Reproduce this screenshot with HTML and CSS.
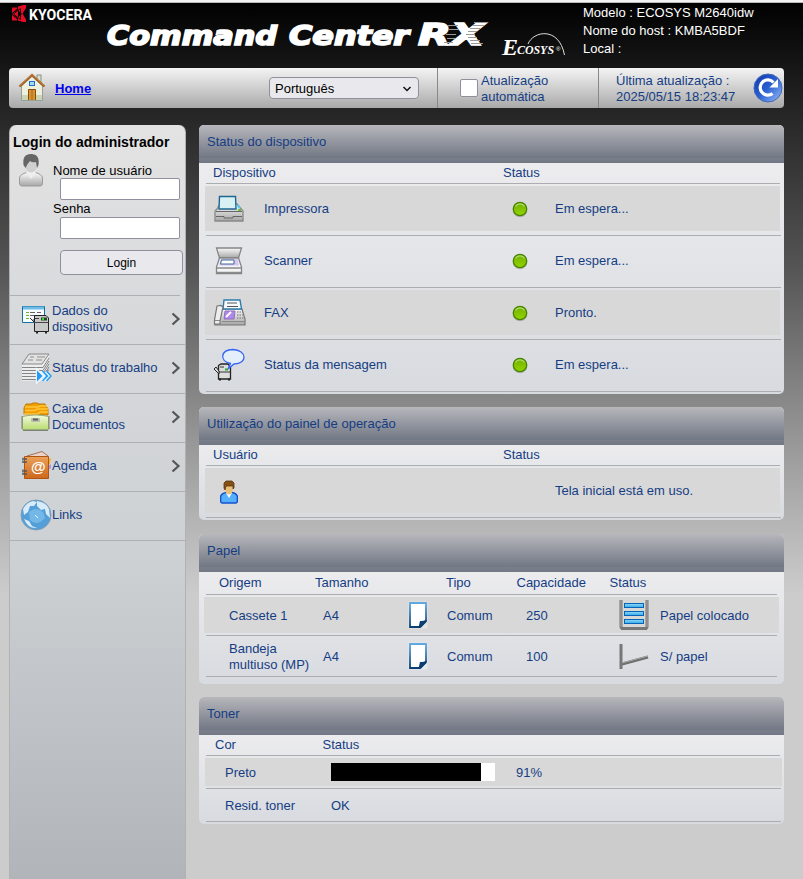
FILE: index.html
```html
<!DOCTYPE html>
<html lang="pt">
<head>
<meta charset="utf-8">
<title>Command Center RX</title>
<link rel="stylesheet" href="styles.css">
</head>
<body>
<svg class="defs" width="0" height="0" aria-hidden="true">
  <defs>
    <linearGradient id="metal" x1="0" y1="0" x2="0" y2="1"><stop offset="0" stop-color="#fafafa"/><stop offset="1" stop-color="#a6a6a6"/></linearGradient>
    <linearGradient id="blue" x1="0" y1="0" x2="1" y2="1"><stop offset="0" stop-color="#0a35ad"/><stop offset=".5" stop-color="#2c61d2"/><stop offset="1" stop-color="#9bc2fa"/></linearGradient>
    <linearGradient id="sheet" x1="0" y1="0" x2="0" y2="1"><stop offset="0" stop-color="#5fa8e0"/><stop offset="1" stop-color="#0b3f72"/></linearGradient>
    <linearGradient id="green" x1="0" y1="0" x2="0" y2="1"><stop offset="0" stop-color="#72b000"/><stop offset="1" stop-color="#94d400"/></linearGradient>
    <linearGradient id="orange" x1="0" y1="0" x2="0" y2="1"><stop offset="0" stop-color="#eba159"/><stop offset="1" stop-color="#cd681b"/></linearGradient>
    <linearGradient id="box" x1="0" y1="0" x2="0" y2="1"><stop offset="0" stop-color="#f2fbdd"/><stop offset="1" stop-color="#b9dc70"/></linearGradient>
    <linearGradient id="ink" x1="0" y1="0" x2="0" y2="1"><stop offset="0" stop-color="#8edcfb"/><stop offset="1" stop-color="#35a9e9"/></linearGradient>
    <symbol id="dot" viewBox="0 0 18 18"><circle cx="9" cy="9.8" r="7.4" fill="#777" opacity=".45"/><circle cx="9" cy="9" r="6.7" fill="url(#green)" stroke="#458500" stroke-width="1.2"/><path d="M4.4 6.4A5.4 5.4 0 0 1 13.6 6.4" fill="none" stroke="#b4da70" stroke-width="1.1"/></symbol>
    <symbol id="paper" viewBox="0 0 20 28"><rect x=".5" y=".5" width="19" height="27" rx="1" fill="#fff" opacity=".35"/><path d="M2 2H18V20L12 26H2Z" fill="#fff" stroke="url(#sheet)" stroke-width="1.8"/><path d="M18.500 18.500V21L13 26.500H10.500L12 20Q15 20.500 18.500 18.500Z" fill="#0b3f72"/></symbol>
  </defs>
</svg>

<header class="banner">
  <svg class="brand" width="580" height="64" viewBox="0 3 580 64">
    <g fill="#e60a24"><path d="M12 7.500H17V9L12 13ZM12 15 17 19V20.500H12ZM18 6.500 23.500 5H26V8L22.500 13.500 26 19.500V22H23L18 20.500V17.500L22 14 18 10Z"/><path d="M12 14 18 10V18Z"/></g>
    <path d="M13.500 14 20.500 8.500V19.500Z" fill="none" stroke="#170306"/>
    <text class="kyocera" x="29" y="19.500" textLength="63" lengthAdjust="spacingAndGlyphs">KYOCERA</text>
    <text class="wordmark" x="107" y="44.500" textLength="170" lengthAdjust="spacingAndGlyphs">Command</text>
    <text class="wordmark" x="289" y="44.500" textLength="120" lengthAdjust="spacingAndGlyphs">Center</text>
    <text class="wordmark rx" x="418" y="44.500" textLength="66" lengthAdjust="spacingAndGlyphs">RX</text>
    <path d="M447 25.500H458M448 29.500H459M446 34.500H456M447 38.500H455M444 42.500H453M474 22.500H488M472 25.500H484M470 28.500H480M468 31.500H477M466 34.500H475M468 37.500H477M470 40.500H480M471 43.500H483" stroke="#999"/>
    <text class="ecosys" x="502" y="55"><tspan class="cap">E</tspan></text>
    <text class="ecosys" x="517" y="53.500" textLength="37" lengthAdjust="spacingAndGlyphs">COSYS</text>
    <text class="reg" x="556" y="50.500">®</text>
    <path d="M528 44C533 31 559 26 564.500 55" fill="none" stroke="#ddd"/>
  </svg>
  <div class="device">Modelo : ECOSYS M2640idw<br>Nome do host : KMBA5BDF<br>Local :</div>
</header>

<nav class="toolbar">
  <div class="crumb">
    <svg width="30" height="32" viewBox="0 0 30 32">
      <rect x="20" y="3" width="4" height="9" fill="#d8e0cb" stroke="#8c9289"/>
      <path d="M4.500 14 15 4.500 25.500 14V28.500H4.500Z" fill="#edf0dc" stroke="#96a09a"/>
      <path d="M5 23H11V28H5ZM19 23H25V28H19Z" fill="#cdd4b4"/>
      <path d="M2.500 14.500 15 3 27.500 14.500" fill="none" stroke="#a2591a" stroke-width="2.200"/>
      <path d="M3 13.500 15 2.500 27 13.500" fill="none" stroke="#d59a55" stroke-width=".7"/>
      <rect x="12.500" y="9.500" width="5" height="4" fill="#9edcfb" stroke="#246fc9"/>
      <path d="M11.500 28V17.500H18.500V28" fill="#d3962f" stroke="#8d4b14"/><path d="M15 18V28" stroke="#a96b1e"/>
    </svg>
    <a class="home" href="#">Home</a>
    <div class="select"><span>Português</span><svg width="10" height="6" viewBox="0 0 10 6"><path d="M1.500 1 5 4.500 8.500 1" fill="none" stroke="#111" stroke-width="1.500"/></svg></div>
  </div>
  <label class="auto"><span class="check"></span><span>Atualização<br>automática</span></label>
  <div class="updated"><span>Última atualização :<br>2025/05/15 18:23:47</span>
    <svg width="30" height="30" viewBox="0 0 30 30"><circle cx="15" cy="15" r="14" fill="url(#blue)" stroke="#4268b5"/><path d="M19.500 20.500A7.600 7.600 0 1 1 20.500 9.500" fill="none" stroke="#fff" stroke-width="3.200"/><path d="M25 6V14.500H16.500Z" fill="#fff"/></svg>
  </div>
</nav>

<main class="layout">
  <aside class="sidebar">
    <section class="login">
      <h2>Login do administrador</h2>
      <div class="form">
        <svg width="26" height="34" viewBox="0 0 26 34">
          <path d="M1.500 31V25Q2 21 9 19.500H17Q24 21 24.500 25V31Q24 33 22 33H4Q2 33 1.500 31Z" fill="url(#metal)" stroke="#9b9b9b"/>
          <path d="M8 20 13 26 18 20 16 17H10Z" fill="#eee"/>
          <ellipse cx="13" cy="12" rx="6" ry="7.500" fill="#d0d0d0"/>
          <path d="M5.500 12Q4 1 13 1 22 1 20.500 12L19 15 18 9Q14 10 12 8 9 11 7.500 15Z" fill="#666"/>
        </svg>
        <div class="fields"><span>Nome de usuário</span><i class="input"></i><span class="second">Senha</span><i class="input"></i><button>Login</button></div>
      </div>
    </section>
    <hr>
    <a class="item"><svg width="32" height="32" viewBox="0 0 32 32"><path d="M2.500 3.500H24.500V19.500H2.500Z" fill="#f8fdff" stroke="#126f9e"/><path d="M3 5H24" stroke="#70bce8" stroke-width="3"/><path d="M6 9.500H9M6 12.500H9M6 15.500H9" stroke="#71b52d"/><path d="M10 9.500H15M10 12.500H18M17 9.500H21" stroke="#666"/><path d="M10 15 14 19V16" fill="#ddd" stroke="#333"/><path d="M14.500 12.500H26L28.500 15V28.500H14.500Z" fill="#c8c8c8" stroke="#222"/><path d="M14 19.500H28M15 15.500H19" stroke="#444"/><path d="M21 16H27" stroke="#29432a" stroke-width="3"/><path d="M22 16H24" stroke="#2bdf2b" stroke-width="2"/><path d="M16 29.500H18M25 29.500H27" stroke="#222" stroke-width="2"/></svg><span>Dados do dispositivo</span><svg class="arrow" viewBox="0 0 10 14"><path d="M1.500 1.500 7.500 7 1.500 12.500"/></svg></a>
    <a class="item"><svg width="32" height="32" viewBox="0 0 32 32"><path d="M9 2H29L27 28 2 29V13Z" fill="#eee"/><path d="M9 2 29 2 22 12H2Z" fill="#e2e2e2" stroke="#888"/><path d="M2 15.500H23L29 6M2 18.500H23L29 9M2 21.500H23L29 12M2 24.500H23L29 15M2 27.500H20M23 21 29 18" fill="none" stroke="#858585"/><path d="M10 5H14M17 5H25M8 8H13M16 8H22" stroke="#aaa" stroke-width="1.300"/><path d="M17 18 23 24 17 30ZM22 19.500 26 24 22 29M25.500 19.500 30 24 25.500 29" fill="#259af0" stroke="#e9f6ff" stroke-width="2.400"/><path d="M17 18.500 22.500 24 17 29.500Z" fill="#259af0"/><path d="M22.500 19 27 24 22.500 29M26.500 19 31 24 26.500 29" fill="none" stroke="#259af0" stroke-width="1.400"/></svg><span>Status do trabalho</span><svg class="arrow" viewBox="0 0 10 14"><path d="M1.500 1.500 7.500 7 1.500 12.500"/></svg></a>
    <a class="item"><svg width="32" height="32" viewBox="0 0 32 32"><path d="M4 13V7L6 3H11L13 2H17L19 3H25L28 8V14Z" fill="#f29d00" stroke="#bd7b0a"/><path d="M5 6H18L20 5H27M5 9.500H15L17 8H28M4 13H18L20 11H28" fill="none" stroke="#ffc73c" stroke-width="1.500"/><path d="M2.500 15.500Q9 14 15.500 14 22 14 28.500 15.500V28.500H2.500Z" fill="url(#box)" stroke="#9aac7f"/><path d="M2 15V28M29 15V28M3 29.500H28" stroke="#7d8371"/><rect x="11" y="17" width="9" height="4" rx="1" fill="#b9bcae"/><path d="M13 18.500H18" stroke="#5f6159" stroke-width="2"/></svg><span>Caixa de Documentos</span><svg class="arrow" viewBox="0 0 10 14"><path d="M1.500 1.500 7.500 7 1.500 12.500"/></svg></a>
    <a class="item"><svg width="32" height="32" viewBox="0 0 32 32"><path d="M7 6 22 1.500 28 6V28H7Z" fill="#e8d4cb" stroke="#a86d52"/><path d="M28 9 31 8 30 14H28Z" fill="#f7b02c"/><path d="M28 16 31 14V18L28 20Z" fill="#b391e9"/><path d="M4.500 6.500H28.500V28.500H4.500Z" fill="url(#orange)" stroke="#af5412"/><path d="M2 9H7M2 12H7M2 21H7M2 24H7" stroke="#555" stroke-width="1.500"/><path d="M3 7.500V13M3 19V25" stroke="#777"/><text class="at" x="11" y="22">@</text></svg><span>Agenda</span><svg class="arrow" viewBox="0 0 10 14"><path d="M1.500 1.500 7.500 7 1.500 12.500"/></svg></a>
    <a class="item"><svg width="32" height="32" viewBox="0 0 32 32"><circle cx="16" cy="16" r="15" fill="#559fd8" stroke="#7e9db5"/><path d="M3 10Q7 3 13 2L17 3 14 7 10 7 8 13 4 16ZM17 2Q26 3 29 10L30 19 26 15 25 10 21 11 17 7ZM4 20 9 22 12 27 17 29Q8 30 4 20Z" fill="#eff8fe" opacity=".85"/><path d="M9 13Q16 7 23 13L25 19Q17 28 10 21Z" fill="#73b8e6"/><path d="M15 16 18 19" stroke="#dff" /></svg><span>Links</span></a>
  </aside>

  <div class="panels">
    <section class="panel devices">
      <h3>Status do dispositivo</h3>
      <div class="heads"><span>Dispositivo</span><span>Status</span></div>
      <div class="row shade">
        <svg width="32" height="32" viewBox="0 0 32 32"><path d="M4 16 7 11H24L30 18V28H2V18Z" fill="url(#metal)" stroke="#888" stroke-width="1.300"/><path d="M6.500 3.500H22.500L23 16H6Z" fill="#d8f1f4" stroke="#216591" stroke-width="1.400"/><path d="M3 18.500H29M3 23.500H11V25H20V23.500H29" fill="none" stroke="#666"/><path d="M24 12 27 15" stroke="#55c5ee" stroke-width="2"/><path d="M25 17H28" stroke="#6bc52e" stroke-width="2"/></svg>
        <span>Impressora</span><svg class="dot"><use href="#dot"/></svg><span>Em espera...</span></div>
      <div class="row">
        <svg width="32" height="32" viewBox="0 0 32 32"><path d="M3.500 3H28.500L25.500 13H6.500Z" fill="url(#metal)" stroke="#858585" stroke-width="1.300"/><path d="M6.500 13H25.500L28.500 22V28.500H3.500V22Z" fill="#f4f4f5" stroke="#858585" stroke-width="1.300"/><path d="M8 14H24.500L26 20.500H6Z" fill="#d4c6f3"/><path d="M8.500 15H21V19H7.500Z" fill="#fff" stroke="#416992"/><path d="M4 23H28M4 27.500H28" stroke="#8b8b8b" stroke-width="1.500"/></svg>
        <span>Scanner</span><svg class="dot"><use href="#dot"/></svg><span>Em espera...</span></div>
      <div class="row shade">
        <svg width="34" height="32" viewBox="0 0 34 32"><path d="M10 12H29L32 22V28H2V21Z" fill="url(#metal)" stroke="#777" stroke-width="1.200"/><path d="M11 3H27L28.500 12H10Z" fill="#f6fafc" stroke="#2e7cab" stroke-width="1.400"/><path d="M14 6H24M14 9.500H25" stroke="#555"/><path d="M4 9 8 8.500 10 10 7 24V27H1.500V23Z" fill="#eee" stroke="#777" stroke-width="1.200"/><path d="M12 14H22L21 22H11Z" fill="#ae88ee" stroke="#9270bb"/><path d="M13 20 18 15" stroke="#fff" stroke-width="2"/><path d="M24 15H30M24 18H30M24 21H31" stroke="#777" stroke-dasharray="1.500 1"/><path d="M2 23.500H7M9 24.500H31" stroke="#888"/></svg>
        <span>FAX</span><svg class="dot"><use href="#dot"/></svg><span>Pronto.</span></div>
      <div class="row">
        <svg width="32" height="36" viewBox="0 0 32 36"><path d="M5.500 18.500 8 17H15L17.500 20V32H5.500Z" fill="#ddd" stroke="#222" stroke-width="1.300"/><path d="M5 25H17M7 20H11" stroke="#333"/><path d="M1 22 3 20 6 24V27Z" fill="#ddd" stroke="#222"/><path d="M6 32.500H8M15 32.500H17" stroke="#222" stroke-width="2"/><path d="M15 22 17.500 16.500C6 14 7.500 2.800 20 2.500 34 3 35 17 21 17Z" fill="#e4effb" stroke="#3764f5" stroke-width="1.300"/><path d="M12 22.500H15" stroke="#2daa32" stroke-width="2"/></svg>
        <span>Status da mensagem</span><svg class="dot"><use href="#dot"/></svg><span>Em espera...</span></div>
    </section>

    <section class="panel users">
      <h3>Utilização do painel de operação</h3>
      <div class="heads"><span>Usuário</span><span>Status</span></div>
      <div class="row shade">
        <svg width="20" height="24" viewBox="0 0 20 24"><path d="M1.700 22V16Q3 13 8 12.500H13Q17 13 18.300 16V22L17 23H3Z" fill="#56b0fc" stroke="#1551d1" stroke-width="1.400"/><path d="M7 13 10 18 13 13Z" fill="#fff"/><ellipse cx="10" cy="9" rx="4" ry="5.500" fill="#e9c079"/><path d="M5 8V3L7 1H13L15 3V8L14 9V6H7L6 10Z" fill="#845017" stroke="#5e3510" stroke-width=".8"/></svg>
        <span></span><span></span><span>Tela inicial está em uso.</span></div>
    </section>

    <section class="panel papers">
      <h3>Papel</h3>
      <div class="heads"><span>Origem</span><span>Tamanho</span><span>Tipo</span><span>Capacidade</span><span>Status</span></div>
      <div class="row shade"><span>Cassete 1</span><span>A4</span><svg width="20" height="28"><use href="#paper"/></svg><span>Comum</span><span>250</span>
        <svg width="32" height="32" viewBox="0 0 32 32"><path d="M3 1V28L4 29.500H28L29 28V1" fill="none" stroke="#777" stroke-width="3"/><path d="M3 1V28M29 1V28" stroke="#aaa"/><g fill="url(#ink)" stroke="#0864b5"><rect x="6.500" y="4.500" width="19" height="4"/><rect x="6.500" y="12.500" width="19" height="4"/><rect x="6.500" y="20.500" width="19" height="4"/></g></svg><span>Papel colocado</span></div>
      <div class="row"><span>Bandeja multiuso (MP)</span><span>A4</span><svg width="20" height="28"><use href="#paper"/></svg><span>Comum</span><span>100</span>
        <svg width="32" height="32" viewBox="0 0 32 32"><path d="M3 4V29" stroke="#777" stroke-width="3"/><path d="M4 24 30 17" stroke="#6e6e6e" stroke-width="3"/><path d="M4 23 30 16" stroke="#aaa"/></svg><span>S/ papel</span></div>
    </section>

    <section class="panel toner">
      <h3>Toner</h3>
      <div class="heads"><span>Cor</span><span>Status</span></div>
      <div class="row shade"><span>Preto</span><div class="bar"><div class="level" style="width:150px"></div></div><span>91%</span></div>
      <div class="row"><span>Resid. toner</span><span>OK</span></div>
    </section>
  </div>
</main>
</body>
</html>
```
FILE: styles.css
```css
* { box-sizing: border-box; }

html { height: 100%; }

body {
  margin: 0;
  height: 879px;
  overflow: hidden;
  border-top: 2px solid #f3f3f5;
  background: linear-gradient(#000 0, #282828 120px, #545454 265px, #858585 392px, #b2b2b2 515px, #ccc 595px);
  color: #153d83;
  font: 13px/16px "Liberation Sans", Arial, sans-serif;
}

.defs { position: absolute; }

.banner {
  display: flex;
  height: 66px;
  border-top: 1px solid #bbb;
}

.brand { display: block; flex: none; }
.brand text { fill: #fff; }
.kyocera { font: bold 15.500px Roboto, sans-serif; }
.wordmark { font: italic bold 26px "DejaVu Sans", sans-serif; stroke: #fff; stroke-width: 1.7px; }
.rx { font-size: 31px; }
.ecosys { font: italic bold 13px "Liberation Serif", serif; }
.ecosys .cap { font-size: 24px; }
.brand .reg { font: 6px "Liberation Sans", sans-serif; }

.device {
  padding: 1px 0 0 3px;
  color: #fff;
  line-height: 18px;
  white-space: nowrap;
}

.toolbar {
  display: flex;
  width: 775px;
  height: 40px;
  margin-left: 9px;
  border-radius: 4px;
  background: linear-gradient(#f4f4f4, #a9a9a9);
}

.crumb {
  display: flex;
  align-items: center;
  width: 428px;
  padding-left: 8px;
}

.home {
  width: 214px;
  margin-left: 8px;
  padding-top: 1px;
  color: #00e;
  font-weight: bold;
}

.select {
  display: flex;
  align-items: center;
  justify-content: space-between;
  width: 150px;
  height: 22px;
  padding: 1px 6px 0 5px;
  border: 1px solid #8f8f9d;
  border-radius: 4px;
  background: #e9e9ed;
  color: #000;
}

.auto {
  display: flex;
  align-items: center;
  gap: 3px;
  width: 161px;
  padding-left: 22px;
  border-left: 1px solid #888;
}

.auto span + span,
.updated span { padding-top: 1px; }

.check {
  width: 18px;
  height: 18px;
  border: 1px solid #8f8f9d;
  border-radius: 2px;
  background: #fff;
}

.updated {
  display: flex;
  flex: 1;
  align-items: center;
  justify-content: space-between;
  padding: 0 1px 0 17px;
  border-left: 1px solid #888;
  white-space: nowrap;
}

.layout {
  display: flex;
  gap: 13px;
  padding: 17px 0 0 9px;
}

.sidebar {
  width: 177px;
  height: 760px;
  border: solid #b2b2b4;
  border-width: 0 1px;
  border-radius: 7px 7px 0 0;
  background: linear-gradient(#e3e3e3, #d9dadc 170px, #cdd1d4 430px, #b1b5ba 754px);
}

.login {
  height: 170px;
  padding: 9px 0 0 3px;
  color: #000;
}

.login h2 {
  margin: 0;
  font-size: 14px;
  line-height: 16px;
  white-space: nowrap;
}

.form { display: flex; padding: 3px 0 0 5px; }
.fields { display: flex; flex-direction: column; padding: 10px 0 0 9px; }
.fields span { height: 15px; }
.fields .second { height: 17px; padding-top: 1px; }

.input {
  width: 120px;
  height: 22px;
  margin-left: 7px;
  border: 1px solid #8f8f9d;
  border-radius: 2px;
  background: #fff;
}

.fields button {
  width: 123px;
  height: 25px;
  margin: 11px 0 0 7px;
  padding: 0;
  border: 1px solid #8f8f9d;
  border-radius: 4px;
  background: #e9e9ed;
  color: #000;
  font: 12px "Liberation Sans", Arial, sans-serif;
}

hr {
  width: 170px;
  height: 1px;
  margin: 0;
  border: 0;
  background: #aeb0b4;
}

.item {
  display: flex;
  align-items: center;
  height: 49px;
  padding: 0 4px 2px 10px;
  border-bottom: 1px solid #aeb0b4;
}

.item svg { flex: none; }
.item span { width: 119px; }
.item:first-of-type span { width: 80px; margin-right: 39px; }
.arrow {
  width: 10px;
  height: 14px;
  fill: none;
  stroke: #555;
  stroke-width: 2.2px;
}

.at { fill: #fff; font: bold 15px "Liberation Sans", sans-serif; }

.panels { width: 585px; }

.panel {
  overflow: hidden;
  border-radius: 5px;
  background: linear-gradient(#ececee 38px, #d7dadf);
}

.panel h3 {
  height: 38px;
  margin: 0;
  padding: 9px 8px;
  background: linear-gradient(#b7b7bc 0, #717784 33px, #7a7f8a 33px, #717784 38px);
  font-size: 13px;
  font-weight: normal;
  line-height: 16px;
}

.heads {
  display: grid;
  grid-template-columns: 290px 1fr;
  width: 574px;
  height: 21px;
  margin-left: 7px;
  padding: 2px 0 0 7px;
  border-bottom: 1px solid #acadb1;
}

.row {
  position: relative;
  display: grid;
  grid-template-columns: 59px 247px 44px 1fr;
  align-items: center;
  width: 575px;
  height: 45px;
  margin: 2px 0 7px 6px;
}

.row > svg:first-child { margin-left: 8px; }
.shade { background: #d8d8d8; }

/* Rule under each row, set below the shaded area. */
.row::after {
  content: "";
  position: absolute;
  left: 1px;
  right: -1px;
  bottom: -5px;
  height: 1px;
  background: #acadb1;
}

.dot { width: 18px; height: 18px; }
.devices { height: 269px; margin-bottom: 13px; }
.users { height: 113px; margin-bottom: 14px; }
.users .row > svg:first-child { margin: 2px 0 0 14px; }

.papers { height: 150px; margin-bottom: 13px; }
.papers .heads {
  grid-template-columns: 96px 131px 70.500px 93px 1fr;
  width: 571px;
  height: 23px;
  padding: 3px 0 0 13px;
}
.papers .row {
  grid-template-columns: 94px 85px 39px 79px 92px 42px 1fr;
  width: 575px;
  height: 36px;
  margin: 2px 0 5px 5px;
  padding-left: 25px;
}
.papers .row::after { left: 2px; right: 2px; bottom: -3px; }
.papers .row > span,
.toner .row > span { padding-top: 2px; }

.toner { height: 127px; }
.toner .heads { grid-template-columns: 107.500px 1fr; padding-left: 9px; }
.toner .row {
  grid-template-columns: 106px 185px 1fr;
  width: 577px;
  height: 28px;
  margin-bottom: 5px;
  padding-left: 20px;
}
.toner .row::after { right: 1px; bottom: -3px; }

.bar { width: 164px; height: 18px; background: #fff; }
.level { height: 100%; background: #000; }
```
